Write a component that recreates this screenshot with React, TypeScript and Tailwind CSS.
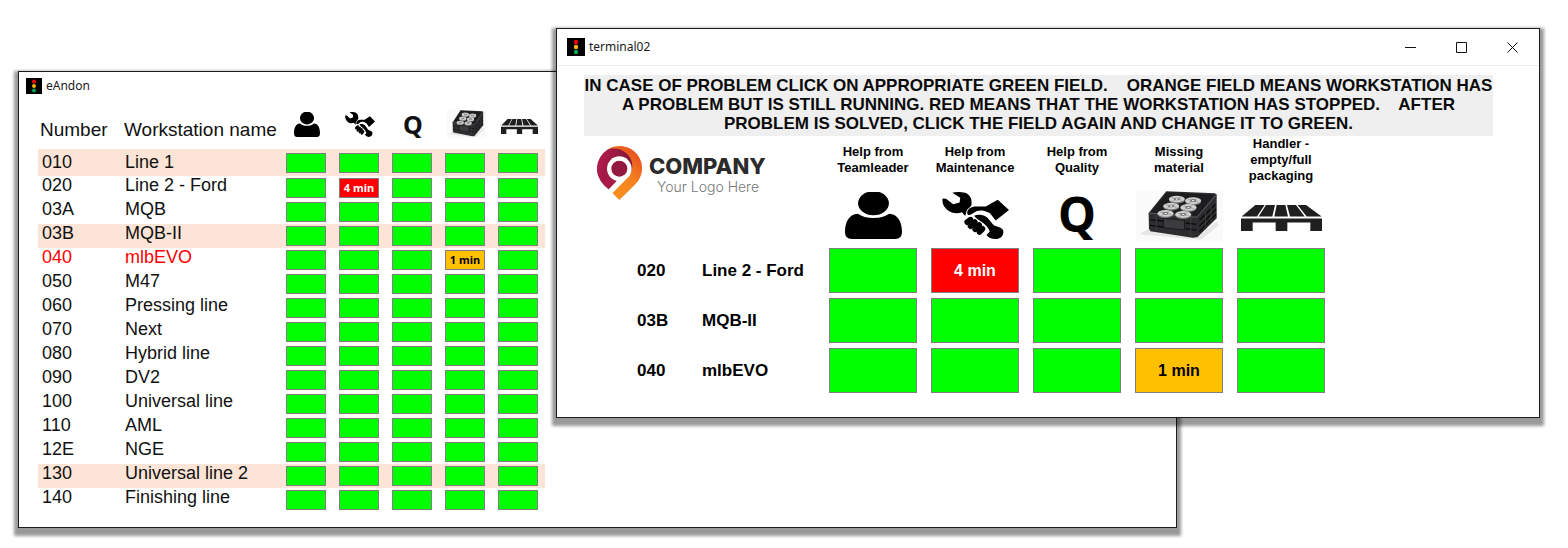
import type { ReactNode } from "react";

type Status = { tone: "ok" | "warn" | "stop"; label?: string };
type Station = { id: string; name: string; highlight?: boolean; alert?: boolean; issues?: Record<number, Status> };

const OK: Status = { tone: "ok" };

const stations: Station[] = [
  { id: "010", name: "Line 1", highlight: true },
  { id: "020", name: "Line 2 - Ford", issues: { 1: { tone: "stop", label: "4 min" } } },
  { id: "03A", name: "MQB" },
  { id: "03B", name: "MQB-II", highlight: true },
  { id: "040", name: "mlbEVO", alert: true, issues: { 3: { tone: "warn", label: "1 min" } } },
  { id: "050", name: "M47" },
  { id: "060", name: "Pressing line" },
  { id: "070", name: "Next" },
  { id: "080", name: "Hybrid line" },
  { id: "090", name: "DV2" },
  { id: "100", name: "Universal line" },
  { id: "110", name: "AML" },
  { id: "12E", name: "NGE" },
  { id: "130", name: "Universal line 2", highlight: true },
  { id: "140", name: "Finishing line" },
];

const terminalStations = stations.filter((s) => ["020", "03B", "040"].includes(s.id));

const toneClass = {
  ok: "bg-[#00ff00] text-black",
  warn: "bg-[#ffc000] text-black",
  stop: "bg-[#ff0000] text-white",
};

function TrafficLight({ className }: { className: string }) {
  return (
    <svg viewBox="0 0 18 18" className={className} aria-hidden="true">
      <rect width="18" height="18" fill="#000" />
      <circle cx="9" cy="4" r="2.2" fill="#ff0000" />
      <circle cx="9" cy="9" r="2.2" fill="#ffb400" />
      <circle cx="9" cy="14" r="2.2" fill="#00a651" />
    </svg>
  );
}

function PersonIcon({ className }: { className: string }) {
  return (
    <svg viewBox="84 188 170 139" preserveAspectRatio="none" className={className} aria-hidden="true">
      <path d="M123 222C123 207 135 193 152 188H186C203 193 215 207 215 222C215 241 194 257 169 257C144 257 123 241 123 222Z" />
      <path d="M122 252C134 260 150 265 169 265C188 265 204 260 216 252C241 252 254 277 254 305C254 319 248 327 233 327H105C90 327 84 319 84 305C84 277 97 252 122 252Z" />
    </svg>
  );
}

function WrenchIcon({ className }: { className: string }) {
  return (
    <svg viewBox="0 0 202 139" preserveAspectRatio="none" className={className} aria-hidden="true">
      <path d="M2 19L12 20L34 36L53 31L55 17L31 2C45 -1 63 -1 74 4C87 11 92 26 88 41C84 46 78 49 74 56L70 71L60 60C46 65 29 63 17 54C5 45 -1 31 2 19Z" />
      <path d="M76 62C76 51 88 43 103 43L132 43L168 23L202 53L162 84L144 62L128 56C115 53 104 55 95 62L84 68C78 69 76 66 76 62Z" />
      <path d="M97 70C110 65 127 67 137 76L156 98C170 104 183 104 185 116C186 130 176 139 161 139C149 139 140 134 134 127L144 117C140 107 133 99 124 92L110 82C104 78 100 74 97 70Z" />
      <g stroke="#000" strokeWidth="17" strokeLinecap="round" fill="none">
        <path d="M76 89L86 82" />
        <path d="M86 101L99 89" />
        <path d="M100 110L112 98" />
        <path d="M113 118L122 109" />
      </g>
    </svg>
  );
}

const discs = [
  [318, 212],
  [367, 217],
  [301, 233],
  [353, 237],
  [284, 255],
  [337, 258],
];

function CrateIcon({ className }: { className: string }) {
  return (
    <svg viewBox="195 188 262 150" preserveAspectRatio="none" className={className} aria-hidden="true">
      <rect x="195" y="188" width="262" height="150" fill="#fafafa" />
      <path d="M205 318L235 300L378 330L437 280L445 290L390 334Z" fill="#e6e6e6" />
      <path d="M286 189L433 195L438 199V270L380 327L366 328L238 309L234 300L233 254Z" fill="#2d2d2f" />
      <path d="M289 192L430 199L379 264L238 253Z" fill="#1d1d1f" />
      <path d="M233 254L378 267L438 199" fill="none" stroke="#5c5c60" strokeWidth="3" />
      <path d="M238 274L276 278M238 291L276 296M345 284L376 288M345 301L378 306M386 276L434 228M386 294L436 243M386 310L436 258" stroke="#0c0c0d" strokeWidth="4" />
      <path d="M278 270L341 276V305L278 298Z" fill="#3c3c3f" stroke="#111" strokeWidth="2" />
      <path d="M404 252V295M421 234V280M256 262V305M360 270V322" stroke="#4d4d50" strokeWidth="2" />
      {discs.map(([cx, cy]) => (
        <g key={`${cx}-${cy}`}>
          <ellipse cx={cx} cy={cy + 3} rx="24" ry="11" fill="#77777a" />
          <ellipse cx={cx} cy={cy} rx="24" ry="10" fill="#cfcfcf" />
          <ellipse cx={cx} cy={cy} rx="9" ry="4" fill="#5c5c5f" />
          <path d={`M${cx - 16} ${cy - 4}L${cx + 16} ${cy + 4}M${cx - 12} ${cy + 6}L${cx + 12} ${cy - 6}`} stroke="#8b8b8d" strokeWidth="2" />
          <ellipse cx={cx} cy={cy} rx="4" ry="2" fill="#eee" />
        </g>
      ))}
    </svg>
  );
}

function PalletIcon({ className }: { className: string }) {
  return (
    <svg viewBox="512 228 243 77" preserveAspectRatio="none" className={className} fill="#1f1f1f" aria-hidden="true">
      <path d="M555 228H583L560 262H514ZM587 228H614L606 262H565ZM619 228H645L653 262H612ZM650 228H677L703 262H659ZM682 228H707L754 262H709Z" />
      <path d="M512 268H755V305H720V280H651V305H616V280H547V305H512Z" />
    </svg>
  );
}

function CompanyLogo() {
  return (
    <div className="flex items-start gap-[7px]">
      <svg viewBox="20 17 135 162" className="h-[54px] w-[45px] shrink-0" aria-hidden="true">
        <defs>
          <linearGradient id="pinOrange" x1="0" y1="1" x2="0.6" y2="0">
            <stop offset="0" stopColor="#f7941d" />
            <stop offset="0.6" stopColor="#f5821f" />
            <stop offset="1" stopColor="#e8541f" />
          </linearGradient>
          <linearGradient id="pinRed" x1="0" y1="0" x2="1" y2="0.3">
            <stop offset="0" stopColor="#b81d4d" />
            <stop offset="1" stopColor="#7d1636" />
          </linearGradient>
        </defs>
        <path d="M50 29A67 67 0 0 1 135 132L87 179L66 158L108 116L124 85Z" fill="url(#pinOrange)" />
        <path d="M40 133A67 67 0 0 1 50 29C85 15 119 37 125 68C127 80 125 92 120 100L98 112L76 126L55 147Z" fill="url(#pinRed)" />
        <path d="M76 126L50 152L61 163L119 104L100 90Z" fill="#fff" />
        <path d="M76 124L55 147L40 133L52 102Z" fill="#a91c48" />
        <circle cx="87" cy="85" r="37" fill="#fff" />
        <circle cx="87" cy="85" r="24" fill="#93193f" />
      </svg>
      <div className="flex flex-col pt-2 font-['Inter',sans-serif]">
        <span className="text-[22px] font-extrabold leading-6 text-[#2b2b2b]">COMPANY</span>
        <span className="pl-2 text-sm font-light leading-[18px] text-[#777777]">Your Logo Here</span>
      </div>
    </div>
  );
}

const categories: { label: string[]; small: ReactNode; large: ReactNode }[] = [
  {
    label: ["Help from", "Teamleader"],
    small: <PersonIcon className="h-[25px] w-[26px]" />,
    large: <PersonIcon className="h-[47px] w-[57px]" />,
  },
  {
    label: ["Help from", "Maintenance"],
    small: <WrenchIcon className="h-[25px] w-[30px]" />,
    large: <WrenchIcon className="h-[47px] w-[67px]" />,
  },
  {
    label: ["Help from", "Quality"],
    small: <span className="font-['Noto_Sans',sans-serif] text-[25px] font-bold leading-6">Q</span>,
    large: <span className="pb-1 font-['Noto_Sans',sans-serif] text-5xl font-bold leading-[48px]">Q</span>,
  },
  {
    label: ["Missing", "material"],
    small: <CrateIcon className="h-[28px] w-[39px]" />,
    large: <CrateIcon className="h-[50px] w-[87px]" />,
  },
  {
    label: ["Handler -", "empty/full", "packaging"],
    small: <PalletIcon className="mt-1 h-[15px] w-[37px]" />,
    large: <PalletIcon className="mt-1 h-[26px] w-[81px]" />,
  },
];

const windowClass = "absolute border border-[#1c1c1c] bg-white shadow-[0_4px_3px_4px_rgba(0,0,0,0.4)]";

function BoardWindow() {
  return (
    <section className={`${windowClass} left-[18px] right-[391px] top-[71px] pb-[15px]`}>
      <header className="flex h-[27px] items-center gap-1 pl-[7px]">
        <TrafficLight className="size-4" />
        <h1 className="font-['Noto_Sans',sans-serif] text-xs text-[#1a1a1a]">eAndon</h1>
      </header>
      <table className="ml-[19px] w-[507px] table-fixed border-collapse text-left text-lg text-[#111]">
        <colgroup>
          <col className="w-[86px]" />
          <col className="w-[162px]" />
          <col className="w-[53px]" />
          <col className="w-[53px]" />
          <col className="w-[53px]" />
          <col className="w-[53px]" />
          <col className="w-[47px]" />
        </colgroup>
        <thead>
          <tr className="h-[50px] text-[19px] leading-6">
            <th className="pl-0.5 pt-3 font-normal">Number</th>
            <th className="whitespace-nowrap pt-3 font-normal">Workstation name</th>
            {categories.map((c) => (
              <th key={c.label.join(" ")} className="p-0" aria-label={c.label.join(" ")}>
                <div className="flex w-[42px] items-center justify-center">{c.small}</div>
              </th>
            ))}
          </tr>
        </thead>
        <tbody>
          {stations.map((s, row) => (
            <tr
              key={s.id}
              className={`align-top leading-[18px] ${row === 0 ? "h-[27px]" : "h-6"} ${s.highlight ? "bg-[#fce4d6]" : ""} ${s.alert ? "text-[#ff0000]" : ""}`}
            >
              <td className={`pl-1 ${row === 0 ? "pt-1" : ""}`}>{s.id}</td>
              <td className={`pl-px ${row === 0 ? "pt-1" : ""}`}>{s.name}</td>
              {categories.map((c, i) => {
                const status = s.issues?.[i] ?? OK;
                return (
                  <td key={c.label.join(" ")} className={row === 0 ? "pt-1" : "pt-0.5"}>
                    <div
                      className={`flex h-5 w-10 items-center justify-center border border-[#7f7f7f] font-['Noto_Sans',sans-serif] text-[11px] font-bold ${toneClass[status.tone]}`}
                    >
                      {status.label}
                    </div>
                  </td>
                );
              })}
            </tr>
          ))}
        </tbody>
      </table>
    </section>
  );
}

const controlIcons = [
  { name: "Minimize", d: "M0 5.5H11" },
  { name: "Maximize", d: "M0.5 0.5H10.5V10.5H0.5Z" },
  { name: "Close", d: "M0.5 0.5L10.5 10.5M10.5 0.5L0.5 10.5" },
];

function TerminalWindow() {
  return (
    <section className={`${windowClass} left-[556px] right-[28px] top-[28px] pb-[19px]`}>
      <header className="flex h-[37px] items-center border-b border-[#ececec] pl-[10px]">
        <TrafficLight className="size-[18px]" />
        <h2 className="ml-1 flex-1 font-['Noto_Sans',sans-serif] text-xs text-[#1a1a1a]">terminal02</h2>
        <div className="flex h-full pr-px">
          {controlIcons.map((c) => (
            <button key={c.name} type="button" aria-label={c.name} className="flex w-[51px] items-center justify-center">
              <svg viewBox="0 0 11 11" className="size-[11px]" fill="none" stroke="#111" strokeWidth="1" aria-hidden="true">
                <path d={c.d} />
              </svg>
            </button>
          ))}
        </div>
      </header>
      <p className="ml-[27px] mr-[46px] mt-[9px] whitespace-pre bg-[#efefef] pb-[3px] pt-px text-center text-[17px] font-bold leading-[19px] text-[#0a0a0a]">
        {"IN CASE OF PROBLEM CLICK ON APPROPRIATE GREEN FIELD.    ORANGE FIELD MEANS WORKSTATION HAS\n" +
          "A PROBLEM BUT IS STILL RUNNING. RED MEANS THAT THE WORKSTATION HAS STOPPED.    AFTER\n" +
          "PROBLEM IS SOLVED, CLICK THE FIELD AGAIN AND CHANGE IT TO GREEN."}
      </p>
      <table className="ml-10 mt-px w-[742px] table-fixed border-collapse text-left font-bold text-black">
        <colgroup>
          <col className="w-[105px]" />
          <col className="w-[127px]" />
          <col className="w-[102px]" />
          <col className="w-[102px]" />
          <col className="w-[102px]" />
          <col className="w-[102px]" />
          <col className="w-[102px]" />
        </colgroup>
        <thead>
          <tr className="align-top">
            <th colSpan={2} className="pt-[9px]">
              <CompanyLogo />
            </th>
            {categories.map((c) => (
              <th key={c.label.join(" ")} className="p-0 pr-[14px] text-center text-[13px] leading-4">
                <div className="flex h-[46px] flex-col items-center justify-center whitespace-nowrap">
                  {c.label.map((line) => (
                    <span key={line}>{line}</span>
                  ))}
                </div>
                <div className="flex h-[65px] items-center justify-center">{c.large}</div>
              </th>
            ))}
          </tr>
        </thead>
        <tbody>
          {terminalStations.map((s) => (
            <tr key={s.id} className="h-[50px] align-top text-[17px] leading-[45px]">
              <td className="pl-10">{s.id}</td>
              <td>{s.name}</td>
              {categories.map((c, i) => {
                const status = s.issues?.[i] ?? OK;
                return (
                  <td key={c.label.join(" ")}>
                    <button
                      type="button"
                      aria-label={`${s.name}: ${c.label.join(" ")} ${status.label ?? ""}`}
                      className={`flex h-[45px] w-[88px] items-center justify-center border border-[#7f7f7f] text-base font-bold ${toneClass[status.tone]}`}
                    >
                      {status.label}
                    </button>
                  </td>
                );
              })}
            </tr>
          ))}
        </tbody>
      </table>
    </section>
  );
}

export default function App() {
  return (
    <main className="relative min-h-screen overflow-hidden bg-white font-['Liberation_Sans',Arial,sans-serif]">
      <BoardWindow />
      <TerminalWindow />
    </main>
  );
}
